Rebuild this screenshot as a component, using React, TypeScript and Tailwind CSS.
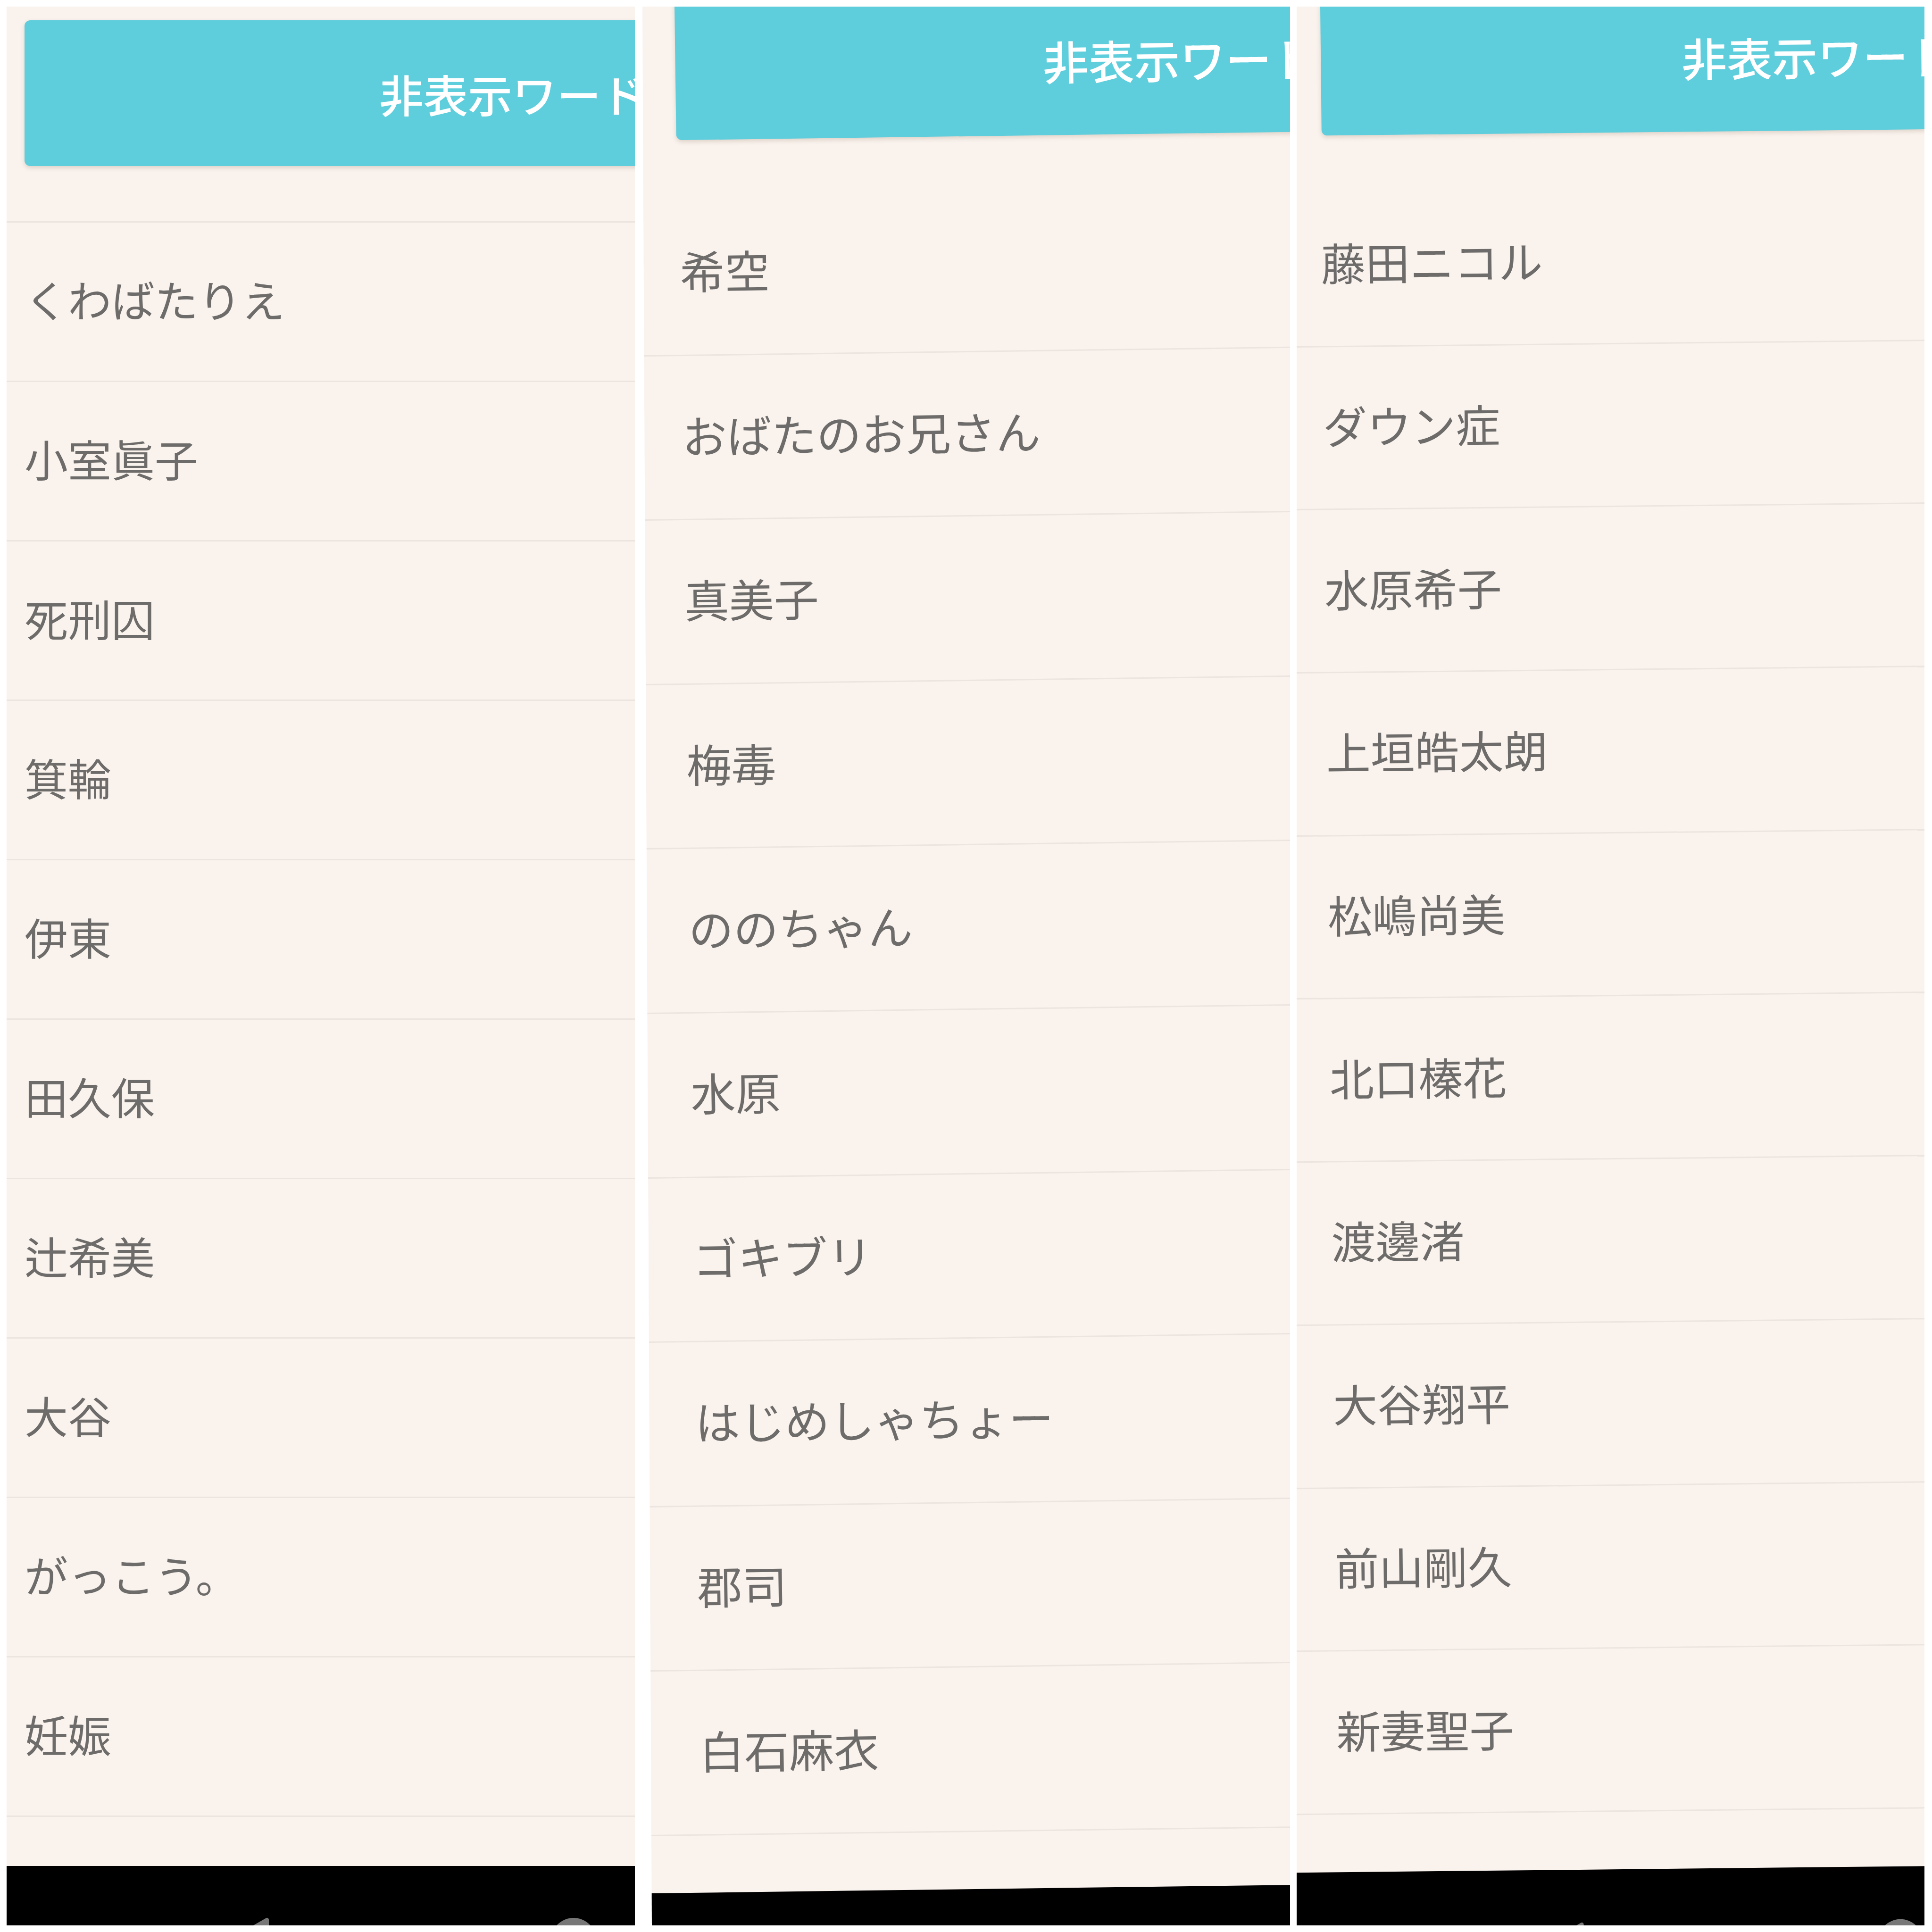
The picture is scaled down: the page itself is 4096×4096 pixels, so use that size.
import React from 'react';

type Panel = {
  width: string;
  clip: string;
  tilt: string;
  header: string;
  title: string;
  list: string;
  row: string;
  item: string;
  tail: string;
  items: string[];
  nav?: { back: number; home: number; top: number };
};

const panels: Panel[] = [
  {
    width: 'w-[1332px]',
    clip: '',
    tilt: '',
    header: 'mt-[29px] ml-[38px] h-[309px]',
    title: 'pl-[752px] text-[94px]',
    list: 'mt-[117px] border-t-[3px]',
    row: 'h-[338px]',
    item: 'pl-[38px] text-[92px]',
    tail: 'h-[104px]',
    items: ['くわばたりえ', '小室眞子', '死刑囚', '箕輪', '伊東', '田久保', '辻希美', '大谷', 'がっこう。', '妊娠'],
    nav: { back: 552, home: 1202, top: 110 },
  },
  {
    width: 'w-[1373px]',
    clip: '[clip-path:polygon(0_0,100%_0,100%_100%,20px_100%)]',
    tilt: 'rotate-[-0.76deg]',
    header: '-mt-[35px] ml-[68px] h-[319px]',
    title: 'pl-[779px] text-[97px]',
    list: 'mt-[109px]',
    row: 'h-[348.6px]',
    item: 'pl-[72px] text-[95px]',
    tail: 'h-[121px]',
    items: ['希空', 'おばたのお兄さん', '真美子', '梅毒', 'ののちゃん', '水原', 'ゴキブリ', 'はじめしゃちょー', '郡司', '白石麻衣'],
  },
  {
    width: 'w-[1331px]',
    clip: '',
    tilt: 'rotate-[-0.6deg]',
    header: '-mt-[42px] ml-[50px] h-[316px]',
    title: 'pl-[765px] text-[96px]',
    list: 'mt-[103px]',
    row: 'h-[345.7px]',
    item: 'pl-[46px] text-[94px]',
    tail: 'h-[122px]',
    items: ['藤田ニコル', 'ダウン症', '水原希子', '上垣皓太朗', '松嶋尚美', '北口榛花', '渡邊渚', '大谷翔平', '前山剛久', '新妻聖子'],
    nav: { back: 562, home: 1237, top: 112 },
  },
];

function NavBar({ nav }: { nav?: Panel['nav'] }) {
  return (
    <div className="-ml-[200px] w-[1900px] h-[260px] bg-black">
      {nav && (
        <svg className="ml-[200px]" width="1400" height="260" viewBox="0 0 1400 260">
          <polygon
            points={`${nav.back},${nav.top + 4} ${nav.back},${nav.top + 84} ${nav.back - 70},${nav.top + 44}`}
            fill="#777777"
            stroke="#777777"
            strokeWidth="8"
            strokeLinejoin="round"
          />
          <circle cx={nav.home} cy={nav.top + 48} r="48" fill="#777777" />
        </svg>
      )}
    </div>
  );
}

function Screen({ p }: { p: Panel }) {
  return (
    <div className={`${p.width} ${p.clip} h-[4068px] shrink-0 overflow-hidden bg-[#f9f2ed]`}>
      <div className={`origin-top-left ${p.tilt} flex flex-col`}>
        <div
          className={`${p.header} w-[1700px] shrink-0 rounded-[12px] bg-[#5ecddc] shadow-[0_4px_10px_rgba(120,90,60,0.2)] flex items-center`}
        >
          <span className={`${p.title} whitespace-nowrap font-medium leading-none text-white`}>非表示ワード</span>
        </div>
        <ul className={`${p.list} -ml-[100px] -mr-[100px] border-[#ebe4df]`}>
          {p.items.map((word) => (
            <li
              key={word}
              className={`${p.row} pl-[100px] pb-[14px] flex items-center border-b-[3px] border-[#ebe4df]`}
            >
              <span className={`${p.item} leading-none text-[#6e6c6a]`}>{word}</span>
            </li>
          ))}
        </ul>
        <div className={p.tail} />
        <NavBar nav={p.nav} />
      </div>
    </div>
  );
}

export default function App() {
  return (
    <div className="w-[4096px] h-[4096px] bg-white pt-[14px] pl-[14px] flex font-['Noto_Sans_CJK_JP','Noto_Sans',sans-serif]">
      <Screen p={panels[0]} />
      <div className="w-[16px] shrink-0" />
      <Screen p={panels[1]} />
      <div className="w-[14px] shrink-0" />
      <Screen p={panels[2]} />
    </div>
  );
}
